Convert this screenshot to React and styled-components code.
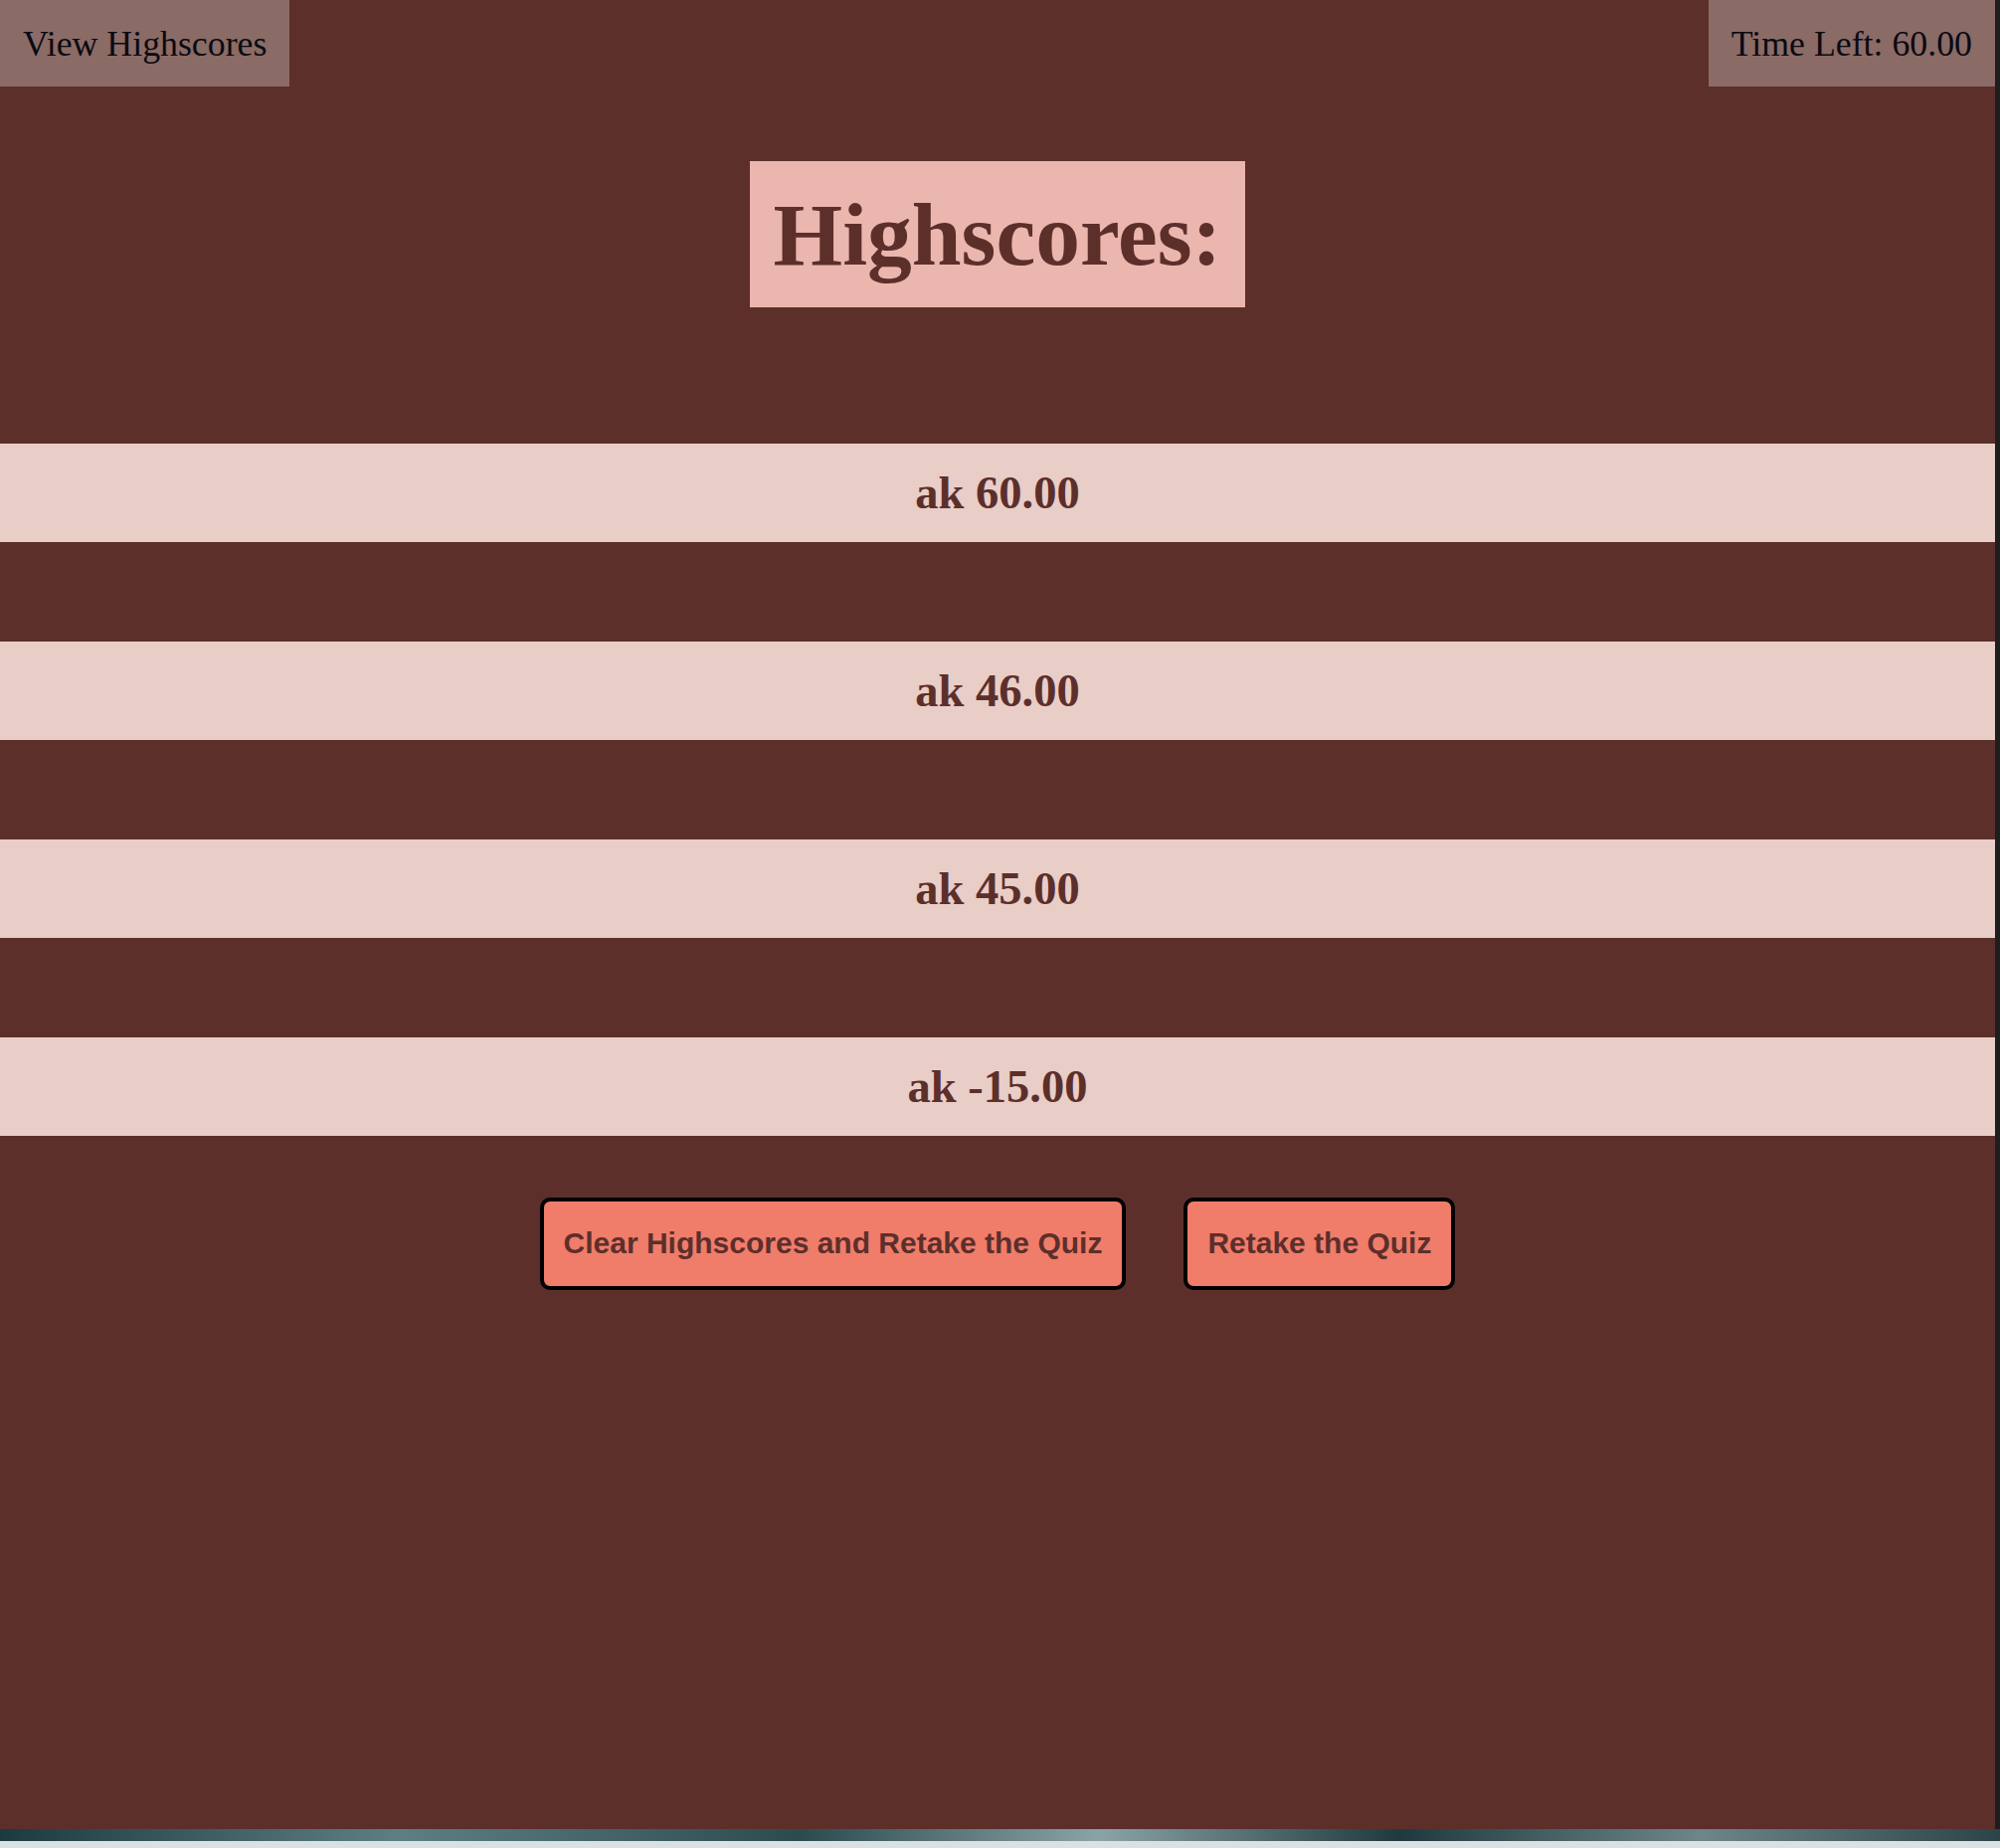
import styled, { createGlobalStyle } from "styled-components";

const GlobalStyle = createGlobalStyle`
  html, body {
    margin: 0;
    padding: 0;
    background: #1e1e1e;
  }
  body {
    font-family: "Liberation Serif", "Times New Roman", serif;
    overflow: hidden;
  }
`;

const Screen = styled.div`
  width: 2011px;
  height: 1858px;
  display: flex;
  flex-direction: column;
`;

const Page = styled.main`
  width: 2006px;
  height: 1839px;
  background-color: #5c2f2b;
  display: flex;
  flex-direction: column;
`;

const TopBar = styled.header`
  display: flex;
  justify-content: space-between;
  align-items: flex-start;
`;

const TopBox = styled.div`
  background-color: #8a6b66;
  color: #0a0a12;
  font-size: 35.8px;
  height: 87px;
  box-sizing: border-box;
  padding: 0 23px;
  display: flex;
  align-items: center;
`;

const Title = styled.h1`
  align-self: center;
  margin: 75px 0 0;
  padding: 22px 24px;
  background-color: #ebb6ae;
  color: #5c2f2b;
  font-size: 89.5px;
  font-weight: bold;
  line-height: normal;
`;

const ScoreList = styled.ol`
  list-style: none;
  margin: 137px 0 0;
  padding: 0;
  display: flex;
  flex-direction: column;
  gap: 100px;
`;

const ScoreRow = styled.li`
  height: 99px;
  background-color: #e9cdc7;
  color: #5c2f2b;
  font-size: 46.5px;
  font-weight: bold;
  display: flex;
  align-items: center;
  justify-content: center;
`;

const ButtonRow = styled.div`
  display: flex;
  justify-content: center;
  gap: 58px;
  margin-top: 62px;
`;

const Button = styled.button`
  background-color: #f07c6a;
  color: #5c2f2b;
  border: 4px solid #000;
  border-radius: 10px;
  padding: 25px 20px 26px;
  font-family: "Liberation Sans", Arial, sans-serif;
  font-weight: bold;
  font-size: 30px;
  line-height: normal;
  cursor: pointer;
`;

const Taskbar = styled.div`
  height: 19px;
  display: flex;
  flex-direction: column;
`;

const Wallpaper = styled.div`
  height: 12px;
  background: linear-gradient(90deg, #1d3a3f, #5d7f83 20%, #2c4b4f 40%, #8aa3a6 55%, #1f3a3e 70%, #6c8689 85%, #2a4448);
`;

const Shelf = styled.div`
  flex: 1;
  background-color: #d9e1e3;
`;

const scores = [
  { name: "ak", score: "60.00" },
  { name: "ak", score: "46.00" },
  { name: "ak", score: "45.00" },
  { name: "ak", score: "-15.00" },
];

export default function App() {
  return (
    <>
      <GlobalStyle />
      <Screen>
        <Page>
          <TopBar>
            <TopBox>View Highscores</TopBox>
            <TopBox>Time Left: 60.00</TopBox>
          </TopBar>
          <Title>Highscores:</Title>
          <ScoreList>
            {scores.map((s, i) => (
              <ScoreRow key={i}>
                {s.name} {s.score}
              </ScoreRow>
            ))}
          </ScoreList>
          <ButtonRow>
            <Button>Clear Highscores and Retake the Quiz</Button>
            <Button>Retake the Quiz</Button>
          </ButtonRow>
        </Page>
        <Taskbar>
          <Wallpaper />
          <Shelf />
        </Taskbar>
      </Screen>
    </>
  );
}
